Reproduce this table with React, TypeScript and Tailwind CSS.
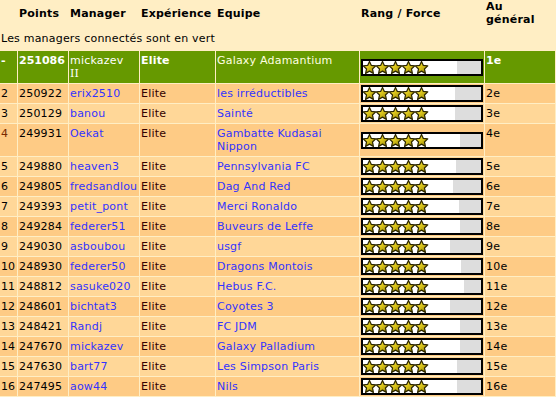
import React from "react";

type Row = {
  rank: string;
  points: string;
  manager: string;
  team: string;
  force: number;
  general: string;
};

const rows: Row[] = [
  { rank: "2", points: "250922", manager: "erix2510", team: "les irréductibles", force: 92, general: "2e" },
  { rank: "3", points: "250129", manager: "banou", team: "Sainté", force: 92, general: "3e" },
  { rank: "4", points: "249931", manager: "Oekat", team: "Gambatte Kudasai\nNippon", force: 97, general: "4e" },
  { rank: "5", points: "249880", manager: "heaven3", team: "Pennsylvania FC", force: 93, general: "5e" },
  { rank: "6", points: "249805", manager: "fredsandlou", team: "Dag And Red", force: 90, general: "6e" },
  { rank: "7", points: "249393", manager: "petit_pont", team: "Merci Ronaldo", force: 96, general: "7e" },
  { rank: "8", points: "249284", manager: "federer51", team: "Buveurs de Leffe", force: 97, general: "8e" },
  { rank: "9", points: "249030", manager: "asboubou", team: "usgf", force: 87, general: "9e" },
  { rank: "10", points: "248930", manager: "federer50", team: "Dragons Montois", force: 98, general: "10e" },
  { rank: "11", points: "248812", manager: "sasuke020", team: "Hebus F.C.", force: 101, general: "11e" },
  { rank: "12", points: "248601", manager: "bichtat3", team: "Coyotes 3", force: 87, general: "12e" },
  { rank: "13", points: "248421", manager: "Randj", team: "FC JDM", force: 97, general: "13e" },
  { rank: "14", points: "247670", manager: "mickazev", team: "Galaxy Palladium", force: 97, general: "14e" },
  { rank: "15", points: "247630", manager: "bart77", team: "Les Simpson Paris", force: 94, general: "15e" },
  { rank: "16", points: "247495", manager: "aow44", team: "Nils", force: 94, general: "16e" },
];

const starPoints =
  "6.5,0.4 8.35,4.45 12.75,4.9 9.45,7.95 10.4,12.4 6.5,10.15 2.6,12.4 3.55,7.95 0.25,4.9 4.65,4.45";

function Stars() {
  return (
    <svg width="66" height="13" viewBox="0 0 66 13" className="block">
      <defs>
        <linearGradient id="starGold" x1="0" y1="0" x2="1" y2="1">
          <stop offset="0" stopColor="#fff7a0" />
          <stop offset="0.4" stopColor="#e2cc1e" />
          <stop offset="1" stopColor="#8f7e00" />
        </linearGradient>
      </defs>
      {[0, 1, 2, 3, 4].map((i) => (
        <polygon
          key={i}
          points={starPoints}
          transform={`translate(${i * 13} 0)`}
          fill="url(#starGold)"
          stroke="#2e2800"
          strokeWidth="1.25"
          strokeLinejoin="round"
        />
      ))}
    </svg>
  );
}

function ForceBar({ force }: { force: number }) {
  // inner width of the bar is 118px
  return (
    <div className="relative h-[17px] w-[122px] border-2 border-black bg-[#dddddd]">
      <div className="h-full bg-white" style={{ width: `${force}px` }} />
      <div className="absolute left-0 top-0">
        <Stars />
      </div>
    </div>
  );
}

const cell = "px-[1px] py-[3px] align-top leading-[13px]";

export default function App() {
  return (
    <div className="h-[397px] w-[556px] overflow-hidden bg-[#ffeec4] font-['DejaVu_Sans',sans-serif] text-[11px] tracking-[0.2px] text-black">
      <table className="-ml-[1px] -mt-[1px] w-[557px] table-fixed border-separate border-spacing-[1px]">
        <colgroup>
          <col className="w-[17px]" />
          <col className="w-[50px]" />
          <col className="w-[70px]" />
          <col className="w-[75px]" />
          <col className="w-[143px]" />
          <col className="w-[124px]" />
          <col className="w-[70px]" />
        </colgroup>
        <thead>
          <tr className="h-[26px] text-left font-bold leading-[13px]">
            <th className="px-[1px]"></th>
            <th className="px-[1px]">Points</th>
            <th className="px-[1px]">Manager</th>
            <th className="px-[1px] whitespace-nowrap">Expérience</th>
            <th className="px-[1px]">Equipe</th>
            <th className="px-[1px]">Rang / Force</th>
            <th className="px-[1px]">
              Au
              <br />
              général
            </th>
          </tr>
        </thead>
        <tbody>
          <tr className="h-[23px]">
            <td colSpan={7} className="px-[1px] leading-[13px]">
              Les managers connectés sont en vert
            </td>
          </tr>
          <tr className="bg-[#669900] text-white">
            <td className={`${cell} font-bold`}>-</td>
            <td className={`${cell} font-bold tracking-normal`}>251086</td>
            <td className={cell}>
              mickazev
              <br />
              <span className="font-['DejaVu_Serif',serif]">II</span>
            </td>
            <td className={`${cell} font-bold`}>Elite</td>
            <td className={`${cell} text-[#ffffe0]`}>Galaxy Adamantium</td>
            <td className="px-[1px] py-[1px] align-middle">
              <ForceBar force={94} />
            </td>
            <td className={`${cell} font-bold`}>1e</td>
          </tr>
          {rows.map((r) => {
            const even = Number(r.rank) % 2 === 0;
            return (
              <tr key={r.rank} className={even ? "bg-[#fecb85]" : "bg-[#ffd798]"}>
                <td className={`${cell} tracking-normal ${r.rank === "4" ? "text-[#7a2a00]" : ""}`}>{r.rank}</td>
                <td className={cell}>{r.points}</td>
                <td className={`${cell} whitespace-nowrap text-[#3333ff]`}>{r.manager}</td>
                <td className={`${cell} text-[#330000]`}>Elite</td>
                <td className={`${cell} whitespace-pre-line text-[#3333ff]`}>{r.team}</td>
                <td className="px-[1px] py-[1px] align-middle">
                  <ForceBar force={r.force} />
                </td>
                <td className={cell}>{r.general}</td>
              </tr>
            );
          })}
        </tbody>
      </table>
    </div>
  );
}
